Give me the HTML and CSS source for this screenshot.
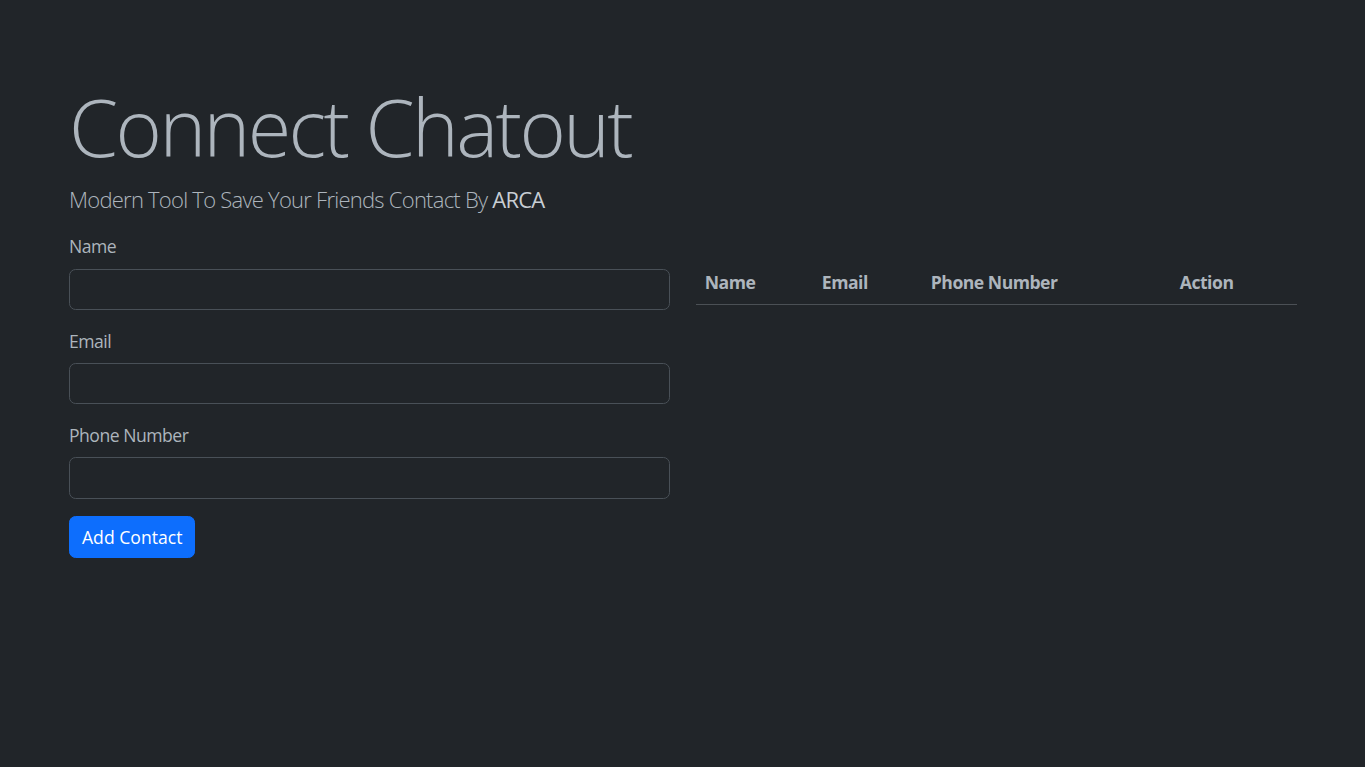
FILE: index.html
```html
<!DOCTYPE html>
<html lang="en">
<head>
<meta charset="utf-8">
<title>Connect Chatout</title>
<link rel="stylesheet" href="styles.css">
</head>
<body>
<main class="page">
  <h1 class="title">Connect Chatout</h1>
  <p class="lead">Modern Tool To Save Your Friends Contact By <span class="brand">ARCA</span></p>
  <div class="columns">
    <form class="contact-form">
      <div class="field">
        <label class="label" for="name">Name</label>
        <input class="input" id="name" type="text">
      </div>
      <div class="field">
        <label class="label" for="email">Email</label>
        <input class="input" id="email" type="email">
      </div>
      <div class="field">
        <label class="label" for="phone">Phone Number</label>
        <input class="input" id="phone" type="text">
      </div>
      <button class="btn" type="button">Add Contact</button>
    </form>
    <div class="table-wrap">
      <table class="contacts">
        <thead>
          <tr>
            <th class="col-name">Name</th>
            <th class="col-email">Email</th>
            <th class="col-phone">Phone Number</th>
            <th class="col-action">Action</th>
          </tr>
        </thead>
        <tbody></tbody>
      </table>
    </div>
  </div>
</main>
</body>
</html>
```

FILE: styles.css
```css
* { box-sizing: border-box; }
html, body { margin: 0; padding: 0; }
body {
  background: #212529;
  color: #adb5bd;
  font-family: "Open Sans", "Noto Sans", sans-serif;
  font-size: 17.6px;
  line-height: 1.5;
  letter-spacing: -0.5px;
  min-height: 767px;
}
.page {
  padding: 79px 68px 0 69px;
}
.title {
  margin: 0 0 8.8px;
  font-size: 79.2px;
  font-weight: 300;
  line-height: 95px;
  color: #adb5bd;
  letter-spacing: -2.6px;
}
.lead {
  margin: 0 0 17.6px;
  font-size: 22px;
  font-weight: 300;
  line-height: 33px;
  letter-spacing: -0.75px;
}
.brand {
  font-weight: 400;
  color: #c8ced4;
}
.columns {
  display: grid;
  grid-template-columns: 601px 601px;
  column-gap: 26px;
  align-items: start;
}
.field {
  margin-bottom: 17.6px;
}
.label {
  display: block;
  margin-bottom: 8.8px;
  line-height: 26.4px;
}
.input {
  display: block;
  width: 100%;
  height: 41.5px;
  background: #212529;
  border: 1px solid #495057;
  border-radius: 6.6px;
  padding: 6.6px 13.2px;
  color: #dee2e6;
  font: inherit;
}
.btn {
  display: inline-block;
  height: 41.5px;
  padding: 0 12px;
  background: #0d6efd;
  color: #fff;
  border: 1px solid #0d6efd;
  border-radius: 6.6px;
  font: inherit;
  line-height: 26.4px;
}
.table-wrap {
  padding-top: 26.4px;
}
.contacts {
  width: 100%;
  border-collapse: collapse;
  table-layout: fixed;
}
.contacts th {
  text-align: left;
  font-weight: 700;
  padding: 8.8px 8.8px;
  line-height: 26.4px;
  border-bottom: 1px solid #4b5055;
  color: #adb5bd;
  white-space: nowrap;
}
.col-name { width: 117px; }
.col-email { width: 109px; }
.col-phone { width: 249px; }
.col-action { width: 126px; }
```
